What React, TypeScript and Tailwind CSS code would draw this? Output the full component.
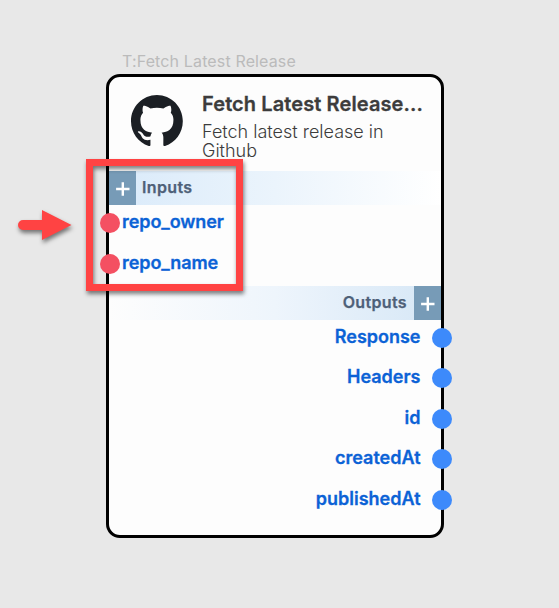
const inputs = ["repo_owner", "repo_name"];
const outputs = ["Response", "Headers", "id", "createdAt", "publishedAt"];

function Plus() {
  return (
    <div className="flex h-[34px] w-[27px] shrink-0 items-center justify-center bg-[#779bb7]">
      <svg width="14" height="14" viewBox="0 0 14 14" className="mt-[2px]" stroke="#fff" strokeWidth="2.4">
        <path d="M6.800 0.3V13.7M0.100 7H13.500" />
      </svg>
    </div>
  );
}

function GithubMark() {
  return (
    <svg width="52" height="51" viewBox="0 0 98 96" fill="#1b1f24" className="ml-[22px] mt-[18px] shrink-0">
      <path d="M48.854 0C21.839 0 0 22 0 49.217c0 21.756 13.993 40.172 33.405 46.69 2.427.49 3.316-1.059 3.316-2.362 0-1.141-.08-5.052-.08-9.127-13.59 2.934-16.42-5.867-16.42-5.867-2.184-5.704-5.42-7.17-5.42-7.17-4.448-3.015.324-3.015.324-3.015 4.934.326 7.523 5.052 7.523 5.052 4.367 7.496 11.404 5.378 14.235 4.074.404-3.178 1.699-5.378 3.074-6.6-10.839-1.141-22.243-5.378-22.243-24.283 0-5.378 1.94-9.778 5.014-13.2-.485-1.222-2.184-6.275.486-13.038 0 0 4.125-1.304 13.426 5.052a46.97 46.97 0 0 1 12.214-1.63c4.125 0 8.33.571 12.213 1.63 9.302-6.356 13.427-5.052 13.427-5.052 2.67 6.763.97 11.816.485 13.038 3.155 3.422 5.015 7.822 5.015 13.2 0 18.905-11.404 23.06-22.324 24.283 1.78 1.548 3.316 4.481 3.316 9.126 0 6.6-.08 11.897-.08 13.526 0 1.304.89 2.853 3.316 2.364 19.412-6.52 33.405-24.935 33.405-46.691C97.707 22 75.788 0 48.854 0z" />
    </svg>
  );
}

function Callout() {
  return (
    <>
      <div className="absolute left-[86px] top-[159px] h-[132px] w-[157px] border-[7px] border-[#ff4343] [filter:drop-shadow(1px_3px_2px_rgba(0,0,0,0.5))]" />
      <svg
        className="absolute left-[10px] top-[200px] overflow-visible [filter:drop-shadow(1px_3px_2px_rgba(0,0,0,0.5))]"
        width="70"
        height="50"
        fill="#ff4343"
      >
        <path d="M13 20H32V10L61.500 25L32 40V30H13A5 5 0 0 1 13 20Z" />
      </svg>
    </>
  );
}

export default function App() {
  return (
    <main className="relative h-[608px] w-[559px] overflow-hidden bg-[#e8e8e8] font-['Inter',sans-serif]">
      <div className="absolute left-[106px] top-[50px] w-[338px]">
        <div className="h-6 whitespace-nowrap pl-[16px] text-[16px] leading-[23px] tracking-[0.14px] text-[#bbbbbb]">
          T:Fetch Latest Release
        </div>
        <section className="h-[464px] rounded-[14px] border-[3px] border-black bg-[#fdfdfd]">
          <header className="flex h-[94px]">
            <GithubMark />
            <div className="ml-[19px] pt-[14px] text-[#3c3c3c]">
              <h1 className="whitespace-nowrap text-[20px] font-semibold leading-[26px] tracking-[0.1px] [-webkit-text-stroke:0.3px]">Fetch Latest Release...</h1>
              <p className="mt-[5px] w-[200px] text-[18px] font-light leading-[19px]">Fetch latest release in Github</p>
            </div>
          </header>
          <div className="flex h-[34px] bg-linear-to-r from-[#d9eafa] via-[#ebf4fc] to-white">
            <Plus />
            <span className="ml-[6px] text-[16px] font-semibold leading-[33px] tracking-[0.35px] text-[#4e6078] [-webkit-text-stroke:0.25px]">Inputs</span>
          </div>
          <ul className="h-[81px]">
            {inputs.map((name) => (
              <li key={name} className="-ml-[9px] flex h-[40.5px] text-[18px] font-semibold tracking-[-0.08px] text-[#0b62d6] [-webkit-text-stroke:0.3px]">
                <i className="mt-[8px] size-5 shrink-0 rounded-full bg-[#f45062]" />
                <span className="ml-[2px] leading-[33px]">{name}</span>
              </li>
            ))}
          </ul>
          <div className="flex h-[34px] justify-end bg-linear-to-l from-[#d6e7f6] via-[#eef5fc] to-[#fdfdfd]">
            <span className="mr-[7px] text-[16px] font-semibold leading-[33px] tracking-[0.35px] text-[#4e6078] [-webkit-text-stroke:0.25px]">Outputs</span>
            <Plus />
          </div>
          <ul>
            {outputs.map((name) => (
              <li key={name} className="-mr-[11px] flex h-[40.4px] justify-end text-[18px] font-semibold text-[#0b62d6] [-webkit-text-stroke:0.3px]">
                <span className="mr-[11.500px] leading-[33px]">{name}</span>
                <i className="mt-[8px] size-5 shrink-0 rounded-full bg-[#3d8afb]" />
              </li>
            ))}
          </ul>
        </section>
      </div>
      <Callout />
    </main>
  );
}
